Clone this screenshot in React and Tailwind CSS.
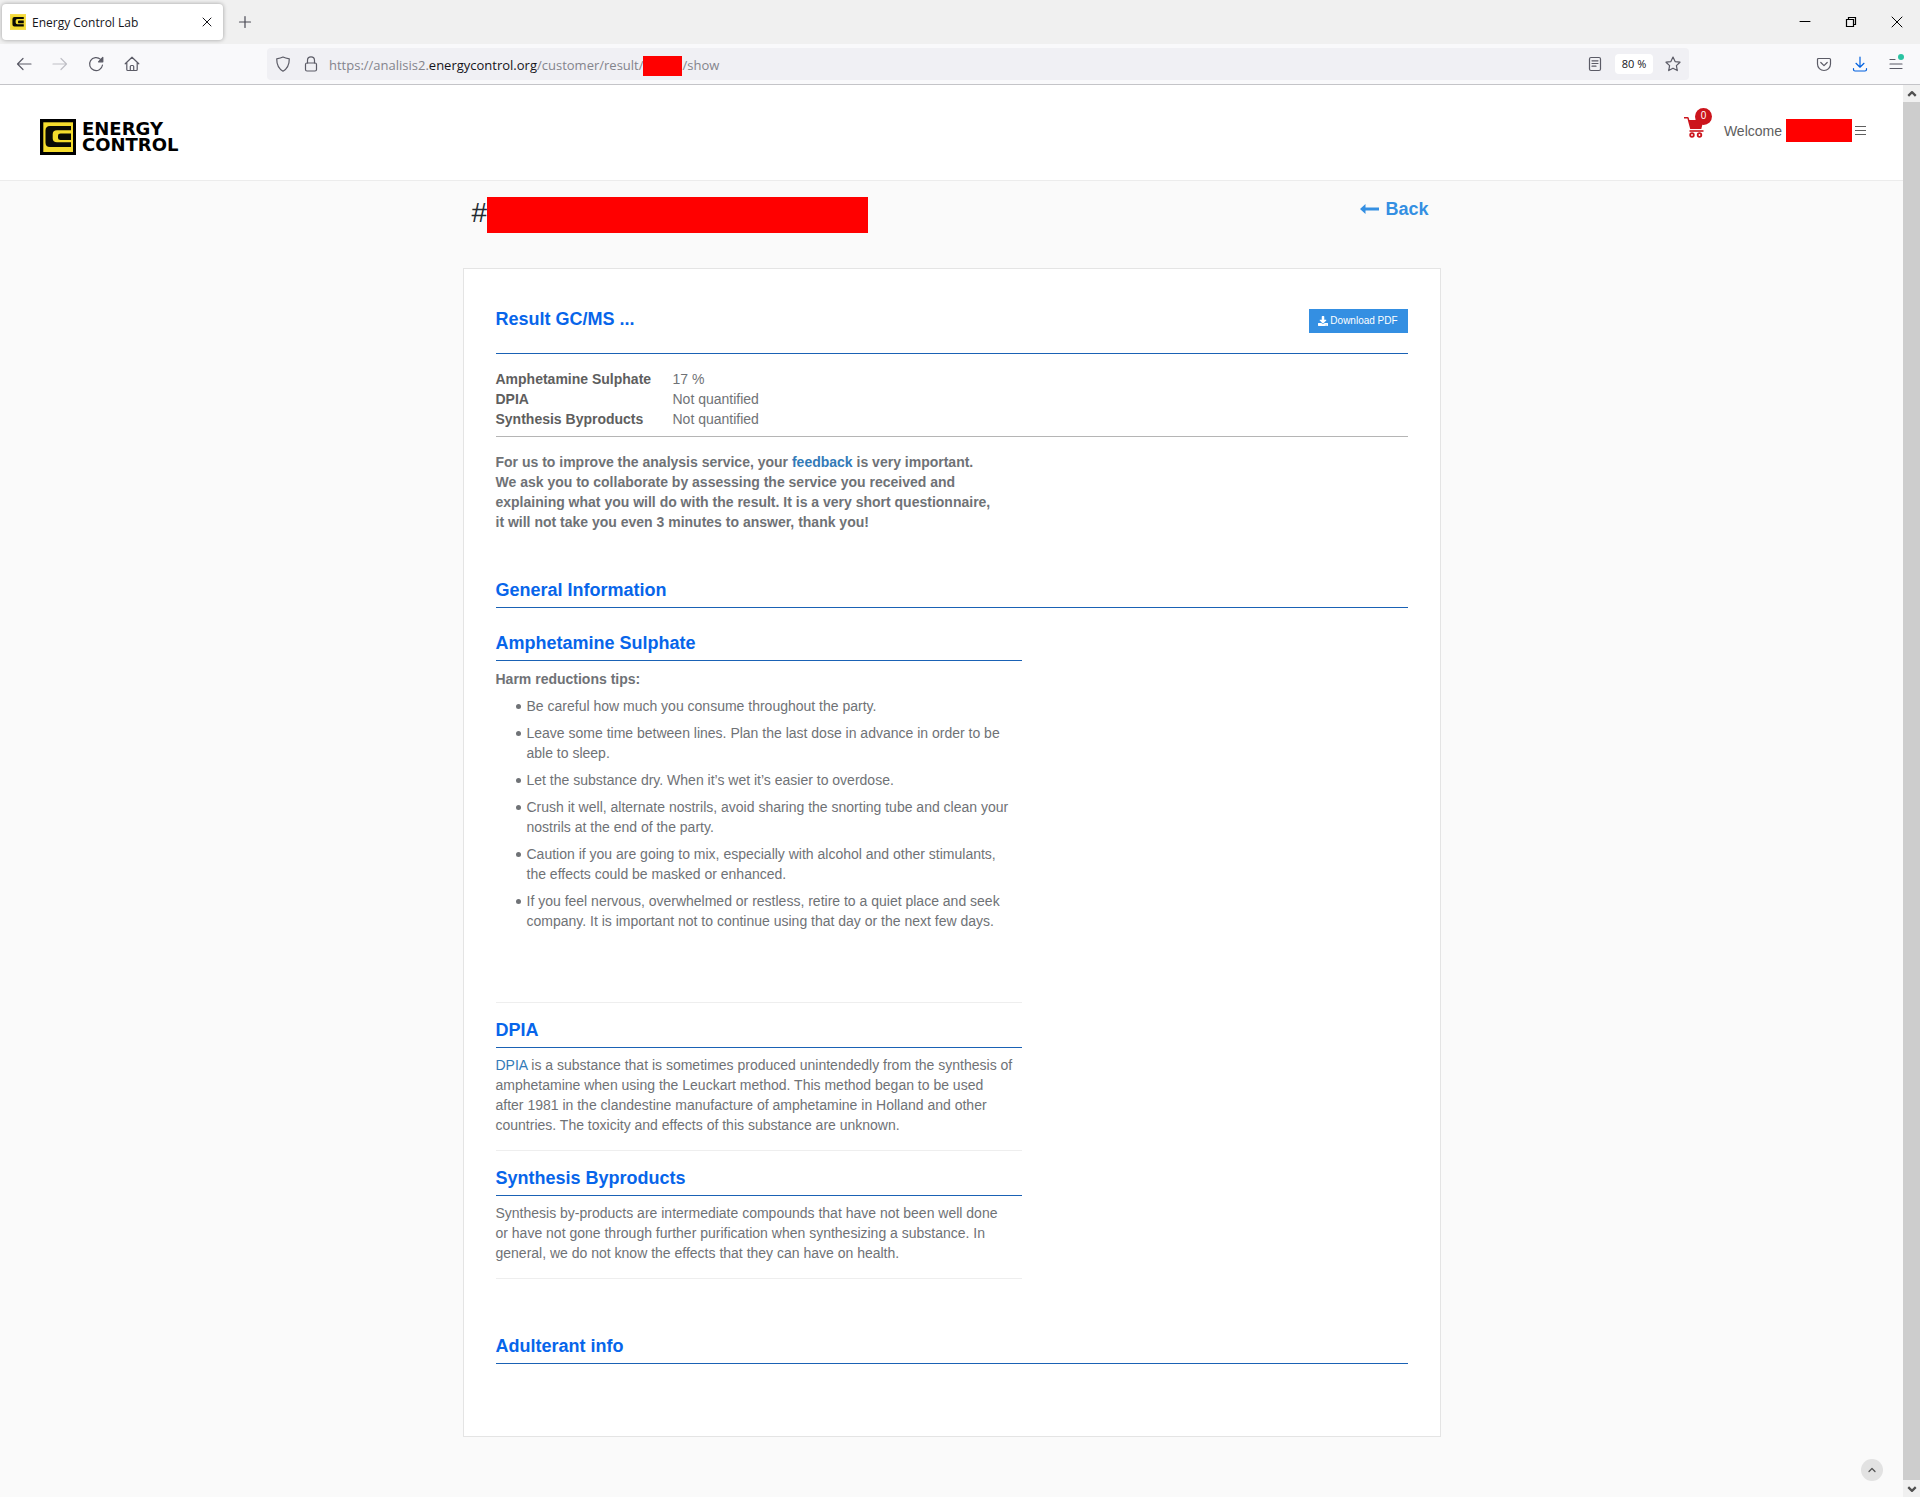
import { FaDownload } from "react-icons/fa";

const tips = [
  ["Be careful how much you consume throughout the party."],
  [
    "Leave some time between lines. Plan the last dose in advance in order to be",
    "able to sleep.",
  ],
  ["Let the substance dry. When it’s wet it’s easier to overdose."],
  [
    "Crush it well, alternate nostrils, avoid sharing the snorting tube and clean your",
    "nostrils at the end of the party.",
  ],
  [
    "Caution if you are going to mix, especially with alcohol and other stimulants,",
    "the effects could be masked or enhanced.",
  ],
  [
    "If you feel nervous, overwhelmed or restless, retire to a quiet place and seek",
    "company. It is important not to continue using that day or the next few days.",
  ],
];

const results = [
  { name: "Amphetamine Sulphate", value: "17 %" },
  { name: "DPIA", value: "Not quantified" },
  { name: "Synthesis Byproducts", value: "Not quantified" },
];

const Icon = ({ children, className = "size-4" }) => (
  <svg
    viewBox="0 0 16 16"
    className={className}
    fill="none"
    stroke="currentColor"
    strokeWidth="1.2"
    strokeLinecap="round"
    strokeLinejoin="round"
    aria-hidden="true"
  >
    {children}
  </svg>
);

const LogoMark = ({ className, frame }) => (
  <svg viewBox="0 0 36 36" className={className} aria-hidden="true">
    <rect width="36" height="36" fill={frame} />
    <rect x="3.300" y="3.300" width="29.700" height="29.700" fill="#f5dc2d" />
    <path
      fill="#0a0a05"
      d="M10 7h21v4.200H17q-4.300 0-4.300 4v4.100q0 4 4.300 4h14V28H10q-4.500 0-4.500-4.500v-12Q5.500 7 10 7z"
    />
    <path fill="#0a0a05" d="M20.500 14.500H31V21H20.500Q18 21 18 19v-2.500q0-2 2.500-2z" />
  </svg>
);

const TabStrip = () => (
  <div className="flex h-11 items-center bg-[#f0f0f0]">
    <div className="ml-0.5 flex h-9 w-[221px] items-center rounded bg-white pr-2 pl-2 shadow-[0_0_4px_rgba(0,0,0,0.35)]">
      <LogoMark className="size-4" frame="#f5dc50" />
      <span className="ml-1.5 flex-1 pt-0.5 text-xs text-[#15141a]">
        Energy Control Lab
      </span>
      <button aria-label="Close tab" className="text-[#15141a]">
        <Icon>
          <path d="M4 4l8 8M12 4l-8 8" strokeWidth="1" />
        </Icon>
      </button>
    </div>
    <button aria-label="New tab" className="ml-3.5 text-[#4a4a55]">
      <Icon>
        <path d="M8 2.500v11M2.500 8h11" />
      </Icon>
    </button>
    <div className="ml-auto flex items-center gap-[30px] pr-[15px] text-black">
      <button aria-label="Minimize">
        <Icon>
          <path d="M3 7.500h10" strokeWidth="1" />
        </Icon>
      </button>
      <button aria-label="Restore">
        <Icon>
          <path
            d="M3.500 5.500h7v7h-7zM5.500 5.500v-2h7v7h-2"
            strokeLinejoin="miter"
          />
        </Icon>
      </button>
      <button aria-label="Close window">
        <Icon>
          <path d="M3 3l10 10M13 3L3 13" strokeWidth="1" />
        </Icon>
      </button>
    </div>
  </div>
);

const NavBar = () => (
  <div className="flex h-[41px] items-center border-b border-[#c4c4c8] bg-[#f9f9fb] text-[#5b5b66]">
    <div className="flex w-[267px] shrink-0 items-center gap-5 pl-4">
      <button aria-label="Back">
        <Icon>
          <path d="M15 8H1.500M7 2.500L1.500 8 7 13.500" />
        </Icon>
      </button>
      <button aria-label="Forward" className="text-[#c0c0c6]">
        <Icon>
          <path d="M1 8h13.500M9 2.500L14.500 8 9 13.500" />
        </Icon>
      </button>
      <button aria-label="Reload">
        <Icon>
          <path d="M14.500 9A6.500 6.500 0 1 1 12.600 3.400L14 4.800" />
          <path d="M14.800 1.500v4.300h-4.300z" fill="currentColor" />
        </Icon>
      </button>
      <button aria-label="Home">
        <Icon>
          <path d="M1.200 7.800L8 1.200l6.800 6.600M2.800 6.500v7q0 1 1 1h8.400q1 0 1-1v-7M6.300 14.300V10.500q0-1 1-1h1.400q1 0 1 1v3.800" />
        </Icon>
      </button>
    </div>
    <div className="flex h-8 max-w-[1422px] flex-1 items-center rounded bg-[#f0f0f4] pr-2 pl-2">
      <Icon>
        <path d="M8 1c2 1 4.500 1.500 6.300 1.800 0 5.200-1.300 9.700-6.300 12.400C3 12.500 1.700 8 1.700 2.800 3.500 2.500 6 2 8 1z" />
      </Icon>
      <Icon className="ml-3 size-4">
        <rect x="2.500" y="7" width="11" height="8" rx="1.500" />
        <path d="M4.500 7V4.300a3.500 3.500 0 0 1 7 0V7" />
      </Icon>
      <div className="ml-2.5 flex items-center pt-[3px] text-[13px] text-[#84848c]">
        https://analisis2.
        <span className="text-[#15141a]">energycontrol.org</span>
        /customer/result/
        <span className="h-5 w-[39px] bg-[#ff0000]" />
        /show
      </div>
      <div className="ml-auto flex items-center gap-3">
        <button aria-label="Reader view">
          <Icon>
            <rect x="2.500" y="1.500" width="11" height="13" rx="1.500" />
            <path d="M5 4.800h6M5 7.500h6M5 10.200h4" />
          </Icon>
        </button>
        <button className="h-5 w-[38px] rounded-sm bg-white text-[11px] text-[#15141a]">
          80 %
        </button>
        <button aria-label="Bookmark">
          <Icon>
            <path d="M8 1l2.100 4.600 4.900.6-3.600 3.400.9 5L8 12.200l-4.300 2.400.9-5L1 6.200l4.900-.6z" />
          </Icon>
        </button>
      </div>
    </div>
    <div className="ml-auto flex shrink-0 items-center gap-5 pr-4">
      <button aria-label="Pocket">
        <Icon>
          <path d="M1.500 3.500q0-1 1-1h11q1 0 1 1V8a6.500 6.500 0 0 1-13 0zM4.800 6.500L8 9.600l3.200-3.100" />
        </Icon>
      </button>
      <button aria-label="Downloads" className="text-[#0061e0]">
        <Icon>
          <path d="M8 1v10M4 7.300L8 11.200l4-3.900M1.500 12.500v1q0 1.500 1.500 1.500h10q1.500 0 1.500-1.500v-1" />
        </Icon>
      </button>
      <button aria-label="Menu">
        <Icon className="size-4 overflow-visible">
          <path d="M2 3.500h5M2 8h12M2 12.500h12" />
          <circle cx="13" cy="1" r="3" fill="#2ac3a2" stroke="none" />
        </Icon>
      </button>
    </div>
  </div>
);

const SiteHeader = () => (
  <header className="flex h-24 items-center justify-between border-b border-[#ececec] bg-white pr-[37px] pl-10">
    <a href="#" className="mt-2 flex items-center gap-1.5">
      <LogoMark className="size-9" frame="#000" />
      <span className="flex flex-col font-['DejaVu_Sans'] text-lg leading-4 font-bold text-black">
        <span>ENERGY</span>
        <span>CONTROL</span>
      </span>
    </a>
    <div className="mb-1 flex items-center text-sm text-[#5e5e5e]">
      <a href="#" aria-label="Cart" className="relative">
        <svg viewBox="0 0 20 22" className="mb-2 h-[22px] w-5" aria-hidden="true">
          <path
            fill="#cc141c"
            d="M0 1h3.600q1 0 1.200 1L5.300 4H19.500l-2.200 9H6.200L3.400 2.600H0z"
          />
          <path fill="#cc141c" d="M5.500 14.200h14v1.600H5.500z" />
          <g fill="none" stroke="#cc141c" strokeWidth="1.800">
            <circle cx="8" cy="19" r="1.800" />
            <circle cx="15.500" cy="19" r="1.800" />
          </g>
        </svg>
        <span className="absolute -top-2 -right-2 flex size-[17px] items-center justify-center rounded-full bg-[#cc141c] text-[10px] text-white">
          0
        </span>
      </a>
      <span className="ml-5">Welcome</span>
      <span className="ml-1 h-[23px] w-[66px] bg-[#ff0000]" />
      <button aria-label="Account menu" className="ml-[3px]">
        <svg viewBox="0 0 11 11" className="size-[11px]" stroke="currentColor">
          <path d="M0 1.500h11M0 5.500h11M0 9.500h11" />
        </svg>
      </button>
    </div>
  </header>
);

const Heading = ({ children }) => (
  <h2 className="border-b border-[#1a62b5] pb-[5px] text-lg leading-6 font-bold text-[#0765ea]">
    {children}
  </h2>
);

const ResultCard = () => (
  <main className="border border-[#e4e4e4] bg-white px-8 pt-[38px] pb-[72px]">
    <div className="flex items-start justify-between border-b border-[#1a62b5] pb-5">
      <h2 className="text-lg leading-6 font-bold text-[#0765ea]">
        Result GC/MS ...
      </h2>
      <button className="mt-0.5 flex h-6 w-[99px] items-center justify-center gap-0.5 bg-[#348fe2] text-[10px] text-white">
        <FaDownload />
        Download PDF
      </button>
    </div>

    <div className="border-b border-[#b5b5b5] pt-[15px] pb-[7px]">
      <table>
        <tbody>
          {results.map((row) => (
            <tr key={row.name}>
              <th
                scope="row"
                className="w-[177px] p-0 text-left font-bold text-[#5e5e5e]"
              >
                {row.name}
              </th>
              <td className="p-0">{row.value}</td>
            </tr>
          ))}
        </tbody>
      </table>
    </div>

    <p className="mt-[15px] max-w-[526px] font-bold">
      For us to improve the analysis service, your{" "}
      <a href="#" className="text-[#337ab7]">
        feedback
      </a>{" "}
      is very important.
      <br />
      We ask you to collaborate by assessing the service you received and
      <br />
      explaining what you will do with the result. It is a very short
      questionnaire,
      <br />
      it will not take you even 3 minutes to answer, thank you!
    </p>

    <section className="mt-[46px]">
      <Heading>General Information</Heading>
      <div className="max-w-[526px]">
        <div className="mt-[23px]">
          <Heading>Amphetamine Sulphate</Heading>
          <p className="mt-2 font-bold">Harm reductions tips:</p>
          <ul className="mt-[7px] flex flex-col gap-[7px] pl-5">
            {tips.map((lines) => (
              <li key={lines[0]} className="flex gap-1.5">
                <span className="mt-2 size-[5px] shrink-0 rounded-full bg-[#6f7276]" />
                <span>
                  {lines[0]}
                  {lines[1] && (
                    <>
                      <br />
                      {lines[1]}
                    </>
                  )}
                </span>
              </li>
            ))}
          </ul>
        </div>
        <div className="mt-[71px] border-t border-[#eeeeee] pt-[15px]">
          <Heading>DPIA</Heading>
          <p className="mt-[7px]">
            <a href="#" className="text-[#337ab7]">
              DPIA
            </a>{" "}
            is a substance that is sometimes produced unintendedly from the
            synthesis of
            <br />
            amphetamine when using the Leuckart method. This method began to be
            used
            <br />
            after 1981 in the clandestine manufacture of amphetamine in Holland
            and other
            <br />
            countries. The toxicity and effects of this substance are unknown.
          </p>
        </div>
        <div className="mt-[15px] border-y border-[#eeeeee] py-[15px]">
          <Heading>Synthesis Byproducts</Heading>
          <p className="mt-[7px]">
            Synthesis by-products are intermediate compounds that have not been
            well done
            <br />
            or have not gone through further purification when synthesizing a
            substance. In
            <br />
            general, we do not know the effects that they can have on health.
          </p>
        </div>
      </div>
    </section>

    <section className="mt-[55px]">
      <Heading>Adulterant info</Heading>
    </section>
  </main>
);

const ScrollBar = () => (
  <div className="flex w-[17px] shrink-0 flex-col bg-[#cdcdcd] text-[#505050]">
    <button
      aria-label="Scroll up"
      className="flex h-[17px] items-center justify-center bg-[#f0f0f0]"
    >
      <Icon className="size-3">
        <path d="M3 10.500l5-5 5 5" strokeWidth="3" strokeLinecap="butt" />
      </Icon>
    </button>
    <button
      aria-label="Scroll down"
      className="mt-auto flex h-[17px] items-center justify-center bg-[#f0f0f0]"
    >
      <Icon className="size-3">
        <path d="M3 5.500l5 5 5-5" strokeWidth="3" strokeLinecap="butt" />
      </Icon>
    </button>
  </div>
);

const App = () => {
  return (
    <div className="flex min-h-screen flex-col">
      <div className="font-['Open_Sans',sans-serif]">
        <TabStrip />
        <NavBar />
      </div>
      <div className="flex flex-1 font-['Liberation_Sans',sans-serif]">
        <div className="flex flex-1 flex-col bg-[#fafafa] text-sm text-[#6f7276]">
          <SiteHeader />
          <div className="mx-auto w-full max-w-[978px]">
            <div className="flex h-[87px] items-start justify-between pt-4 pr-3 pl-[9px]">
              <h1 className="flex text-[28px] leading-8 text-[#242a30]">
                #<span className="h-9 w-[381px] bg-[#ff0000]" />
              </h1>
              <a
                href="#"
                className="flex items-center gap-1.5 text-lg leading-6 font-bold text-[#348fe2]"
              >
                <svg viewBox="0 0 19 10" className="h-2.5 w-[19px]" aria-hidden="true">
                  <path
                    fill="currentColor"
                    d="M0 5l5.500-5v3.600H19v2.800H5.500V10z"
                  />
                </svg>
                Back
              </a>
            </div>
            <ResultCard />
          </div>
          <div className="mt-auto flex justify-end pt-5 pr-5 pb-4">
            <button
              aria-label="Back to top"
              className="flex size-[22px] items-center justify-center rounded-full bg-[#e2e2e2] text-[#555555]"
            >
              <Icon className="size-2">
                <path d="M2 11l6-6 6 6" strokeWidth="2.500" />
              </Icon>
            </button>
          </div>
        </div>
        <ScrollBar />
      </div>
    </div>
  );
};

export default App;
